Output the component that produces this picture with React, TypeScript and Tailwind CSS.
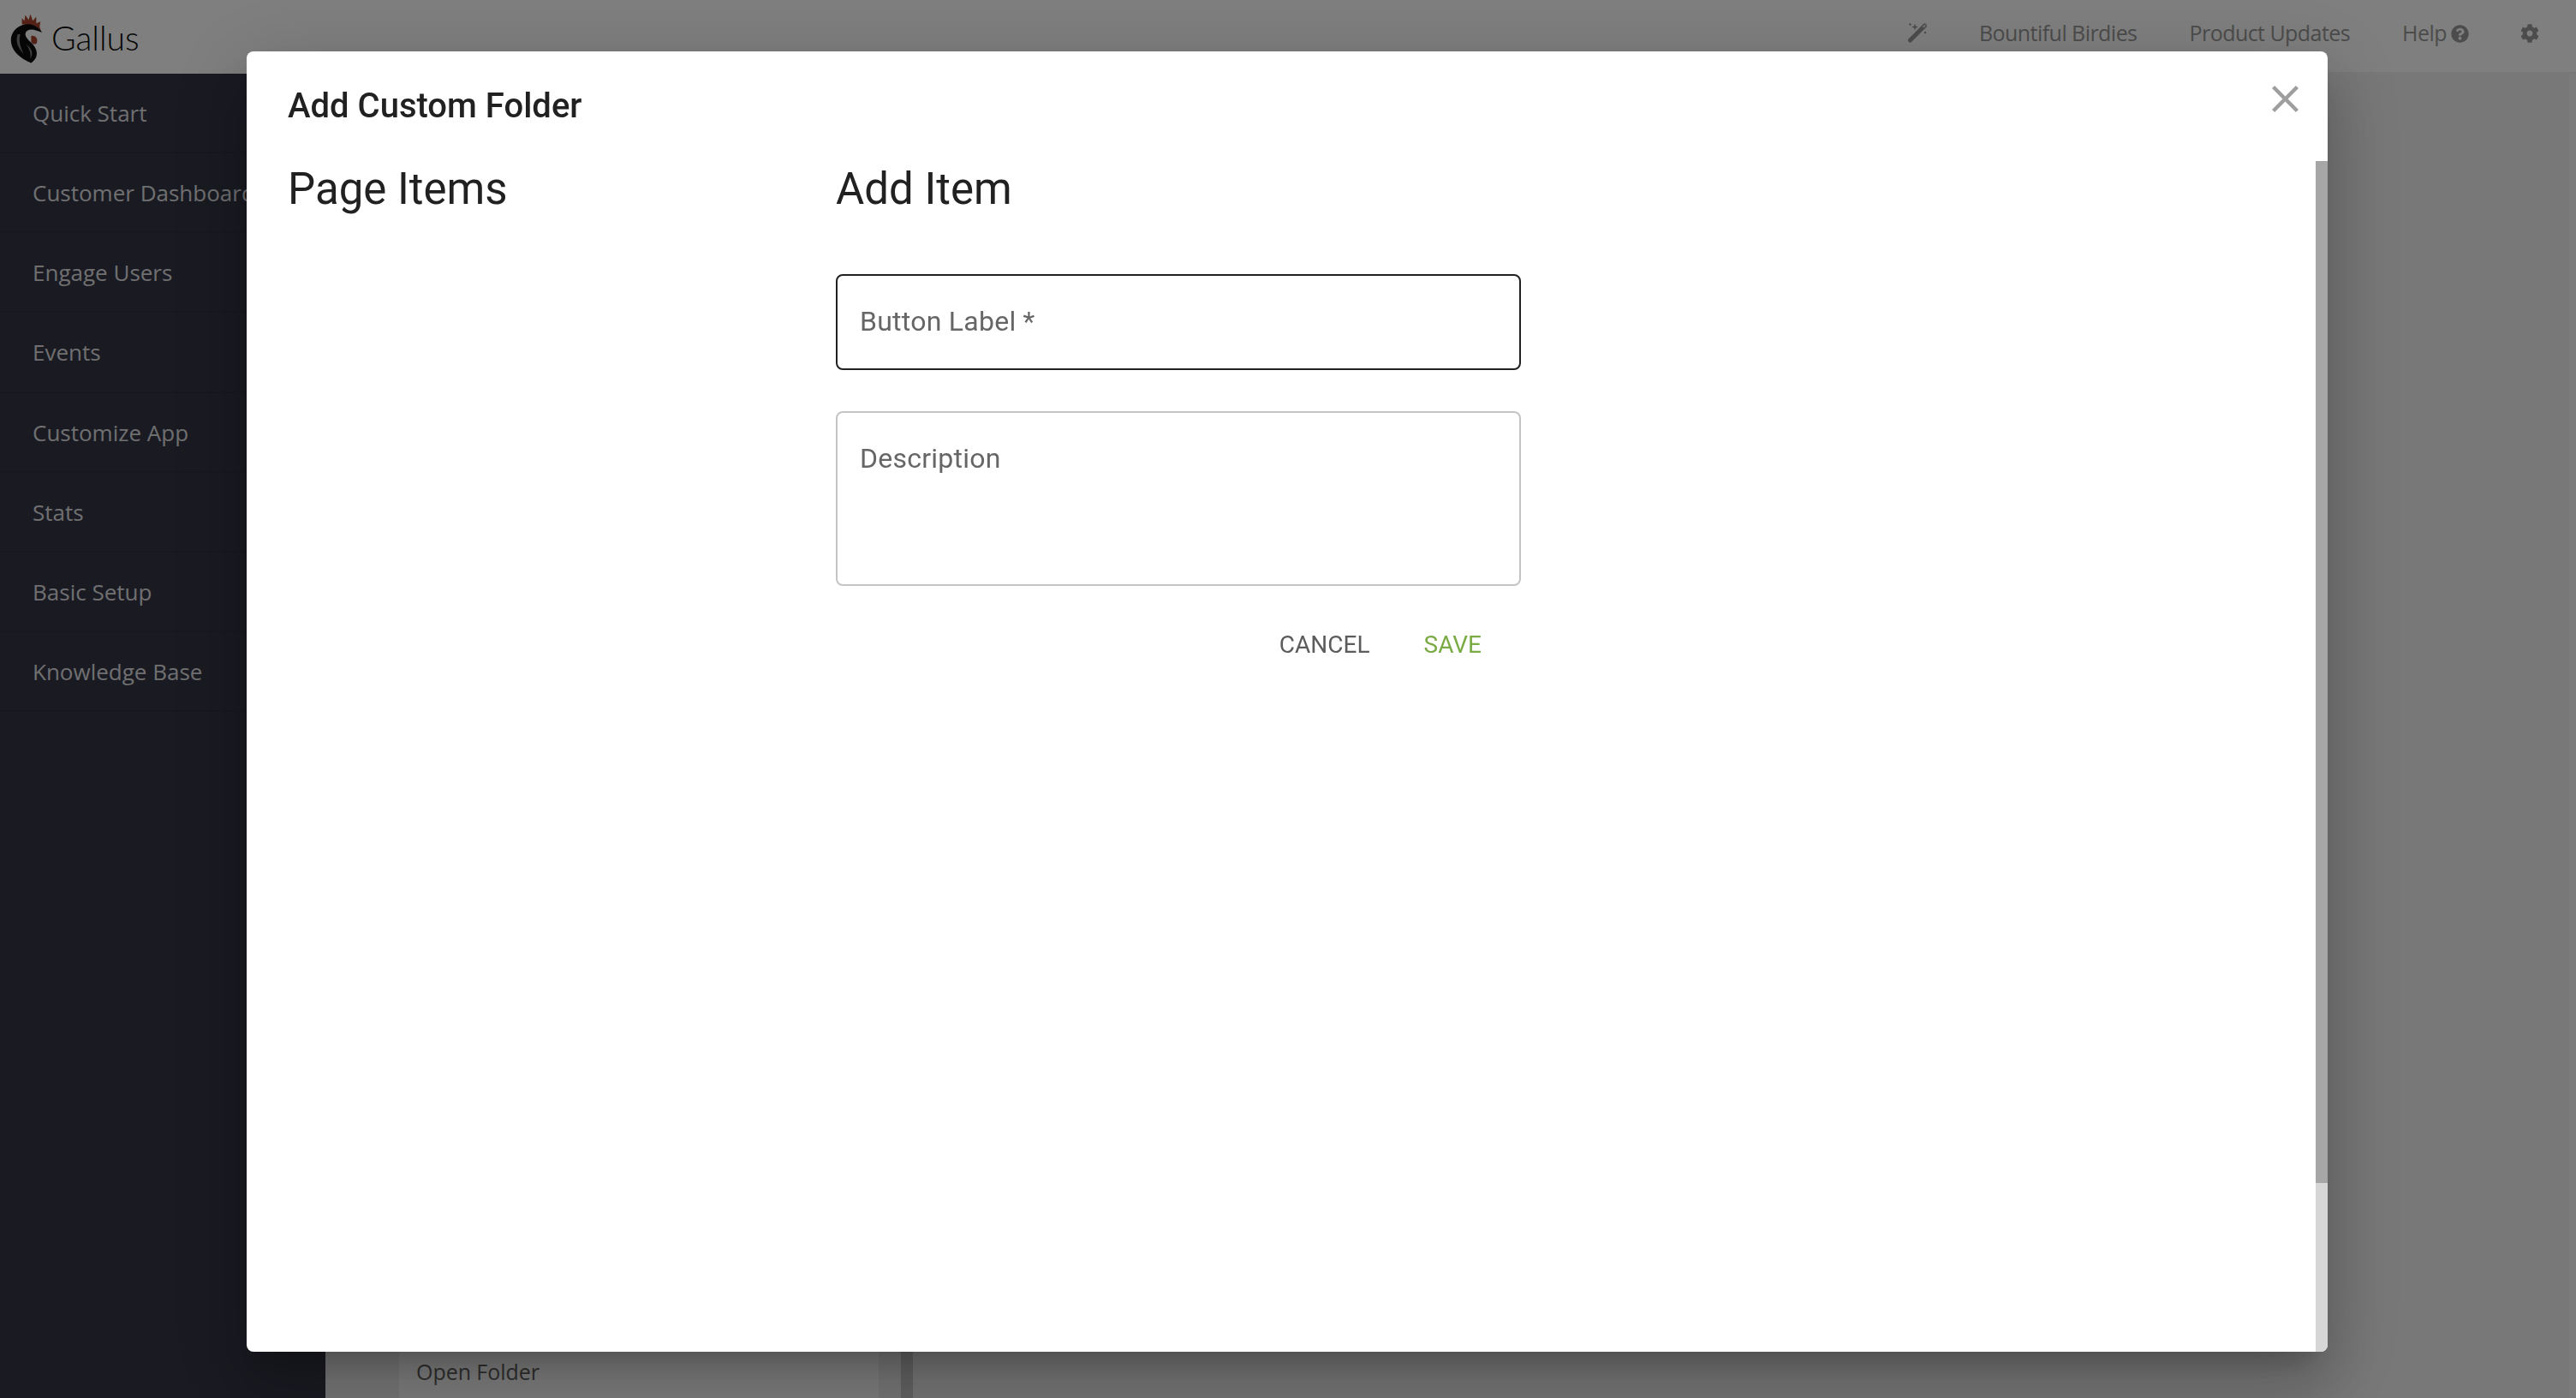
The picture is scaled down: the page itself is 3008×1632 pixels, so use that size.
import { FaCog, FaQuestionCircle } from "react-icons/fa";

const NAV_ITEMS = [
  "Quick Start",
  "Customer Dashboard",
  "Engage Users",
  "Events",
  "Customize App",
  "Stats",
  "Basic Setup",
  "Knowledge Base",
];

function Logo() {
  return (
    <div className="flex items-center h-[86px] shrink-0">
      <svg viewBox="0 0 60 86" className="w-[59px] h-[86px] shrink-0">
        <path
          d="M25 21 L28 24 L29 17 L33 23 L35 16 L38 24 L42 19 L42 27 L47 25 L46 31 L48 37 L42 33 C36 30 30 29 25 28 Z"
          fill="#a8432c"
        />
        <path d="M36 42 C40 41 44 44 43 49 C42 53 38 52 36 49 Z" fill="#a8432c" />
        <path
          d="M34 28 C22 27 12 36 12 47 C12 60 24 69 36 74 C44 69 45 60 38 52 C32 46 27 42 30 37 C34 32 42 35 49 38 C46 33 41 29 34 28 Z"
          fill="#0d0d0d"
        />
        <path d="M20 40 C17 48 20 56 27 63 C23 55 21 48 23 40 Z" fill="#7f7f7f" />
        <path d="M30 52 C34 57 36 63 35 69 C39 63 37 57 30 52 Z" fill="#7f7f7f" />
      </svg>
      <span className="font-['Lato',sans-serif] font-light text-[39px] leading-none text-[#0a0a0a] mt-[3px]">
        Gallus
      </span>
    </div>
  );
}

function WandIcon() {
  return (
    <svg viewBox="0 0 24 24" className="w-[24px] h-[24px] mr-[59px] -mt-[2px]">
      <path d="M2.5 21 L19.5 4" stroke="#989898" strokeWidth="5" strokeLinecap="round" />
      <path d="M18 5.5 L20 3.5" stroke="#ffffff" strokeWidth="1.5" strokeLinecap="round" />
      <path
        d="M8 1.5 L9 4.5 L12 5.5 L9 6.5 L8 9.5 L7 6.5 L4 5.5 L7 4.5 Z"
        fill="#989898"
      />
      <circle cx="2.5" cy="2.5" r="1.2" fill="#989898" />
      <circle cx="20" cy="12" r="1.2" fill="#989898" />
    </svg>
  );
}

function TopBar() {
  return (
    <header className="h-[84px] bg-white flex items-start justify-between pl-[1px] shrink-0 font-['Open_Sans',sans-serif] text-[25px] text-[#989898]">
      <Logo />
      <div className="flex items-center h-[78px]">
        <WandIcon />
        <span className="mr-[61px] tracking-[-0.55px]">Bountiful Birdies</span>
        <span className="mr-[61px] tracking-[-0.55px]">Product Updates</span>
        <span className="mr-[5px] tracking-[-0.55px]">Help</span>
        <FaQuestionCircle className="w-[21px] h-[21px] mr-[60px]" />
        <FaCog className="w-[22px] h-[22px] mr-[43px]" />
      </div>
    </header>
  );
}

function Sidebar() {
  return (
    <aside className="w-[380px] shrink-0 bg-[#343644] border-t-2 border-white font-['Open_Sans',sans-serif] text-[26px] text-[#dedfe0]">
      {NAV_ITEMS.map((item) => (
        <div
          key={item}
          className="h-[93.14px] flex items-center pl-[38px] pt-[2px] border-b-2 border-[#30323f] whitespace-nowrap"
        >
          {item}
        </div>
      ))}
    </aside>
  );
}

function MainContent() {
  return (
    <main className="flex-1 bg-[#f0f0f0] flex items-end justify-between min-w-0">
      <div className="w-[686px] h-[100px] flex pl-[86px] shrink-0">
        <div className="w-[560px] bg-white flex items-end pb-[12px] pl-[20px] font-['Open_Sans',sans-serif] text-[25px] tracking-[-0.05px] text-[#606060]">
          Open Folder
        </div>
        <div className="w-[26px]" />
        <div className="w-[14px] bg-[#c8c8c8]" />
      </div>
      <div className="w-[8px] h-[1546px] bg-[#f6f6f6]" />
    </main>
  );
}

function CustomFolderModal() {
  return (
    <div className="fixed inset-0 bg-black/50">
      <div className="absolute left-[288px] top-[60px] w-[2430px] h-[1518px] rounded-[8px] bg-white overflow-hidden flex shadow-[0_22px_30px_-14px_rgba(0,0,0,0.2),0_48px_76px_6px_rgba(0,0,0,0.14),0_18px_92px_16px_rgba(0,0,0,0.12)] font-['Roboto',sans-serif]">
        <div className="flex-1 min-w-0 relative pl-[48px] pr-[20px]">
          <h2 className="text-[40px] leading-[48px] font-medium text-[#212121] pt-[40px] h-[88px] box-content">
            Add Custom Folder
          </h2>
          <svg
            viewBox="5 5 14 14"
            className="absolute right-[20px] top-[40px] w-[31px] h-[31px]"
            fill="#9e9e9e"
          >
            <path d="M19 6.41L17.59 5 12 10.59 6.41 5 5 6.41 10.59 12 5 17.59 6.41 19 12 13.41 17.59 19 19 17.59 13.41 12z" />
          </svg>
          <div className="flex mt-[3px]">
            <div className="w-[640px] shrink-0">
              <h3 className="text-[51px] leading-[60px] text-[#212121]">Page Items</h3>
            </div>
            <div className="w-[800px] shrink-0">
              <h3 className="text-[51px] leading-[60px] text-[#212121]">Add Item</h3>
              <div className="mt-[69px] h-[112px] border-2 border-[#212121] rounded-[8px] flex items-center pb-[2px] px-[26px] text-[32px] tracking-[0.25px] text-[#666666]">
                Button Label *
              </div>
              <div className="mt-[48px] h-[204px] border-2 border-[#c4c4c4] rounded-[8px] pt-[31px] px-[26px] text-[32px] tracking-[0.25px] leading-[44px] text-[#666666]">
                Description
              </div>
              <div className="flex justify-end gap-[63px] mt-[52px] pr-[46px] text-[28px] leading-[34px] text-[#5c5c5c]">
                <span>CANCEL</span>
                <span className="text-[#7aab45]">SAVE</span>
              </div>
            </div>
          </div>
        </div>
        <div className="w-[14px] shrink-0 flex flex-col pt-[128px]">
          <div className="h-[1193px] bg-[#a6a6a6]" />
          <div className="flex-1 bg-[#d6d6d6]" />
        </div>
      </div>
    </div>
  );
}

export default function App() {
  return (
    <div className="h-screen overflow-hidden flex flex-col">
      <TopBar />
      <div className="flex-1 flex min-h-0">
        <Sidebar />
        <MainContent />
      </div>
      <CustomFolderModal />
    </div>
  );
}
